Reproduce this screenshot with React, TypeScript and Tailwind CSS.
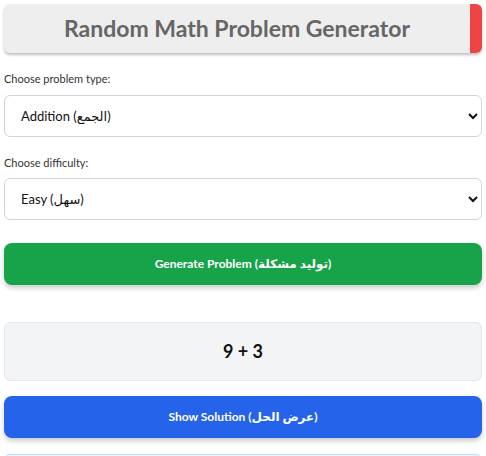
import { useState } from 'react'

const font = { fontFamily: 'Lato, "DejaVu Sans", sans-serif' }

export default function App() {
  const [type, setType] = useState('add')
  const [level, setLevel] = useState('easy')

  return (
    <div className="p-1 bg-white min-h-screen text-[#333]" style={font}>
      <div className="flex h-[49px] rounded-md bg-[#eeeeee] shadow-[0_2px_3px_rgba(0,0,0,0.25)] overflow-hidden">
        <h1 className="flex-1 flex items-center justify-center text-[23px] font-bold text-[#666666]">
          Random Math Problem Generator
        </h1>
        <div className="w-[12px] bg-[#ef4444]" />
      </div>

      <label className="block mt-[18px] mb-[7px] text-[11px] text-[#333]">Choose problem type:</label>
      <select
        value={type}
        onChange={e => setType(e.target.value)}
        className="block w-full h-[42px] px-3 rounded-md border border-[#d1d5db] bg-white text-[13px] text-[#111]"
      >
        <option value="add">Addition (الجمع)</option>
        <option value="sub">Subtraction (الطرح)</option>
        <option value="mul">Multiplication (الضرب)</option>
      </select>

      <label className="block mt-[18px] mb-[7px] text-[11px] text-[#333]">Choose difficulty:</label>
      <select
        value={level}
        onChange={e => setLevel(e.target.value)}
        className="block w-full h-[42px] px-3 rounded-md border border-[#d1d5db] bg-white text-[13px] text-[#111]"
      >
        <option value="easy">Easy (سهل)</option>
        <option value="medium">Medium (متوسط)</option>
        <option value="hard">Hard (صعب)</option>
      </select>

      <button className="block w-full h-[42px] mt-[23px] rounded-lg bg-[#16a34a] text-white text-[12px] font-bold shadow-[0_3px_5px_rgba(0,0,0,0.2)]">
        Generate Problem (توليد مشكلة)
      </button>

      <div className="mt-[37px] h-[59px] flex items-center justify-center rounded-md border border-[#e5e7eb] bg-[#f3f4f6] text-[18px] font-bold text-[#111]">
        9 + 3
      </div>

      <button className="block w-full h-[42px] mt-[15px] rounded-lg bg-[#2563eb] text-white text-[12px] font-bold shadow-[0_3px_5px_rgba(0,0,0,0.2)]">
        Show Solution (عرض الحل)
      </button>

      <div className="mt-[16px] h-[40px] rounded-md border border-[#bfdbfe] bg-[#eff6ff]" />
    </div>
  )
}
